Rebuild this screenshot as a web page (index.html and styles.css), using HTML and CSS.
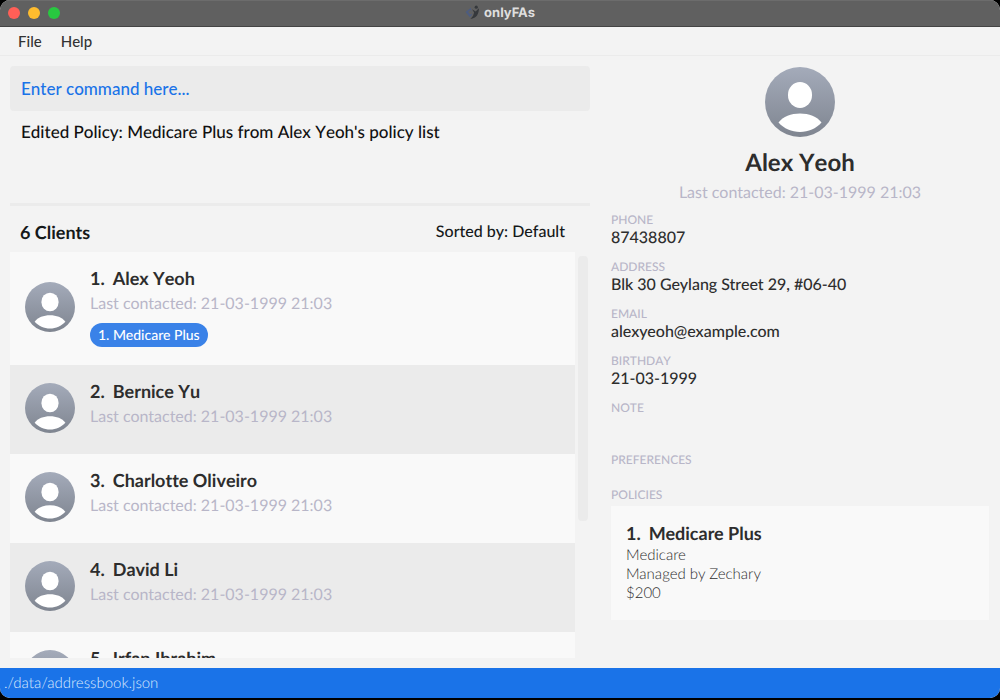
FILE: index.html
```html
<!DOCTYPE html>
<html lang="en">
<head>
<meta charset="utf-8">
<title>onlyFAs</title>
<link rel="stylesheet" href="styles.css">
</head>
<body>
<svg class="defs" aria-hidden="true">
  <defs>
    <linearGradient id="shade" x1="0" y1="0" x2="0" y2="1">
      <stop offset="0" stop-color="#a4abba"/>
      <stop offset="1" stop-color="#7f8590"/>
    </linearGradient>
    <symbol id="avatar" viewBox="0 0 70 70">
      <circle cx="35" cy="35" r="35" fill="url(#shade)"/>
      <rect x="23" y="15" width="24" height="26" rx="12" ry="12.5" fill="#fff"/>
      <path d="M13.500 55.500C18 49.500 26 46.500 35 46.500S52 49.500 56.500 55.500C51 61.500 43.500 65 35 65S19 61.500 13.500 55.500Z" fill="#fff"/>
    </symbol>
  </defs>
</svg>
<div class="window">
  <header class="titlebar">
    <div class="lights">
      <button class="light close" aria-label="Close"></button>
      <button class="light minimize" aria-label="Minimize"></button>
      <button class="light zoom" aria-label="Zoom"></button>
    </div>
    <h1 class="title">
      <svg class="logo" viewBox="0 0 14 14" aria-hidden="true">
        <path d="M5.500 2.500L0.500 6.500 4.500 11.500 6.500 9Z" fill="#4c5c80"/>
        <path d="M5 4.500L3 6.500 5 9 7 7.500Z" fill="#606060"/>
        <path d="M13 3C13 8 11 12.500 5 13 7.500 11 8 9 8.500 7L6.500 4 10 6Z" fill="#35383c"/>
        <circle cx="10.500" cy="2" r="1.500" fill="#35383c"/>
      </svg>
      onlyFAs
    </h1>
  </header>
  <nav class="menubar">
    <button class="menu">File</button>
    <button class="menu">Help</button>
  </nav>
  <main class="content">
    <section class="left">
      <input class="command" type="text" aria-label="Command" placeholder="Enter command here...">
      <p class="result">Edited Policy: Medicare Plus from Alex Yeoh's policy list</p>
      <div class="list-head">
        <h2 class="count">6 Clients</h2>
        <span class="sort">Sorted by: Default</span>
      </div>
      <div class="list-area">
        <ol class="clients">
          <li class="client">
            <svg class="avatar"><use href="#avatar"/></svg>
            <div class="info">
              <h3 class="name"><span>1.</span><span>Alex Yeoh</span></h3>
              <p class="contacted">Last contacted: 21-03-1999 21:03</p>
              <span class="tag">1. Medicare Plus</span>
            </div>
          </li>
          <li class="client">
            <svg class="avatar"><use href="#avatar"/></svg>
            <div class="info">
              <h3 class="name"><span>2.</span><span>Bernice Yu</span></h3>
              <p class="contacted">Last contacted: 21-03-1999 21:03</p>
            </div>
          </li>
          <li class="client">
            <svg class="avatar"><use href="#avatar"/></svg>
            <div class="info">
              <h3 class="name"><span>3.</span><span>Charlotte Oliveiro</span></h3>
              <p class="contacted">Last contacted: 21-03-1999 21:03</p>
            </div>
          </li>
          <li class="client">
            <svg class="avatar"><use href="#avatar"/></svg>
            <div class="info">
              <h3 class="name"><span>4.</span><span>David Li</span></h3>
              <p class="contacted">Last contacted: 21-03-1999 21:03</p>
            </div>
          </li>
          <li class="client">
            <svg class="avatar"><use href="#avatar"/></svg>
            <div class="info">
              <h3 class="name"><span>5.</span><span>Irfan Ibrahim</span></h3>
              <p class="contacted">Last contacted: 21-03-1999 21:03</p>
            </div>
          </li>
        </ol>
        <div class="track"><div class="thumb"></div></div>
      </div>
    </section>
    <section class="detail">
      <div class="profile">
        <svg class="avatar large"><use href="#avatar"/></svg>
        <h2 class="profile-name">Alex Yeoh</h2>
        <p class="contacted">Last contacted: 21-03-1999 21:03</p>
      </div>
      <dl class="fields">
        <div class="field"><dt>PHONE</dt><dd>87438807</dd></div>
        <div class="field"><dt>ADDRESS</dt><dd>Blk 30 Geylang Street 29, #06-40</dd></div>
        <div class="field"><dt>EMAIL</dt><dd>alexyeoh@example.com</dd></div>
        <div class="field"><dt>BIRTHDAY</dt><dd>21-03-1999</dd></div>
        <div class="field note"><dt>NOTE</dt><dd></dd></div>
        <div class="field preferences"><dt>PREFERENCES</dt><dd></dd></div>
        <div class="field policies"><dt>POLICIES</dt>
          <dd class="policy">
            <h3 class="name"><span>1.</span><span>Medicare Plus</span></h3>
            <p>Medicare</p>
            <p>Managed by Zechary</p>
            <p>$200</p>
          </dd>
        </div>
      </dl>
    </section>
  </main>
  <footer class="status">./data/addressbook.json</footer>
</div>
</body>
</html>
```
FILE: styles.css
```css
* { box-sizing: border-box; margin: 0; padding: 0; }

body {
  background: #000;
  color: #2d2d2d;
  font: 500 17px/24px Lato, "Open Sans", sans-serif;
  font-kerning: none;
  font-variant-ligatures: none;
  text-rendering: geometricPrecision;
}

button { border: 0; background: none; font: inherit; color: inherit; }
ol { list-style: none; }
.defs { position: absolute; width: 0; height: 0; }

.window {
  display: flex;
  flex-direction: column;
  height: calc(100vh - 2px);
  border-radius: 10px;
  overflow: hidden;
  background: #f3f3f3;
}

.titlebar {
  display: grid;
  grid-template-columns: 1fr auto 1fr;
  align-items: center;
  height: 27px;
  padding: 0 8px 2px;
  background: #606060;
  border-top: 1px solid #6c6c6c;
  border-bottom: 1px solid #444;
}
.lights { display: flex; gap: 8px; }
.light { width: 12px; height: 12px; border-radius: 50%; }
.close { background: #ff5f57; }
.minimize { background: #febc2e; }
.zoom { background: #28c840; }
.title {
  display: flex;
  align-items: center;
  gap: 4px;
  color: #dedede;
  font: 700 13px/16px Inter, sans-serif;
}
.logo { width: 15px; height: 15px; }

.menubar {
  display: flex;
  gap: 19px;
  height: 29px;
  padding: 0 18px;
  border-bottom: 1px solid #ebebeb;
}
.menu { font-size: 15px; line-height: 28px; color: #333; }

.content {
  flex: 1;
  display: grid;
  grid-template-columns: 580fr 378fr;
  column-gap: 21px;
  min-height: 0;
  padding: 10px 11px 10px 10px;
}
.left { display: flex; flex-direction: column; min-width: 0; min-height: 0; }

.command {
  width: 100%;
  height: 45px;
  flex: none;
  padding: 0 11px;
  border: 0;
  border-radius: 4px;
  background: #ebebeb;
  font: inherit;
  color: #1a73e8;
}
.command::placeholder { color: #1a73e8; opacity: 1; }
.result {
  flex: none;
  height: 95px;
  padding: 9px 11px;
  border-bottom: 3px solid #ebebeb;
  color: #111;
}

.list-head {
  display: flex;
  flex: none;
  align-items: center;
  justify-content: space-between;
  height: 46px;
  padding: 6px 25px 0 10px;
  color: #15191a;
}
.count { font-size: 18px; font-weight: 700; }
.sort { font-size: 16px; }

.list-area { display: flex; flex: 1; gap: 3px; min-height: 0; }
.clients { flex: 1; overflow: hidden; }
.track { width: 12px; padding: 4px 2px 0 0; }
.thumb { height: 66%; border-radius: 4px; background: #ebebeb; }

.client {
  display: flex;
  align-items: center;
  gap: 15px;
  padding: 14px 15px 16px;
  background: #f9f9f9;
}
.client:nth-child(even) { background: #ebebeb; }
.avatar { display: block; flex: none; width: 50px; height: 50px; }
.client .avatar { margin-bottom: 2px; }
.info { min-height: 59px; }
.name {
  display: flex;
  gap: 8px;
  font-size: 18px;
  font-weight: 700;
  line-height: 24px;
  color: #2d2d2d;
}
.contacted { font-size: 16px; line-height: 24px; font-weight: 400; font-kerning: normal; color: #b8b6c8; }
.info .contacted { padding-top: 2px; }
.tag {
  display: block;
  width: fit-content;
  margin: 7px 0 2px;
  padding: 0 8px;
  border-radius: 12px;
  background: #3a82e8;
  color: #fff;
  font-size: 14px;
  line-height: 24px;
  font-kerning: normal;
}

.detail { min-width: 0; }
.profile { display: flex; flex-direction: column; align-items: center; padding-top: 1px; }
.large { width: 70px; height: 70px; }
.profile-name { padding-top: 10px; font-size: 24px; font-weight: 700; line-height: 32px; }
.profile .contacted { padding-top: 2px; }

.fields { padding-top: 7px; }
.field { min-height: 47px; }
.field dt { color: #b8b6c8; font-size: 12px; line-height: 16px; }
.field dd { font-size: 16px; line-height: 19px; font-kerning: normal; }
.field.note { min-height: 52px; }
.field.preferences { min-height: 35px; }
.field .policy {
  margin-top: 3px;
  padding: 15px;
  background: #f9f9f9;
  font-size: 15px;
  font-weight: 300;
  line-height: 19px;
}
.policy .name { padding-bottom: 1px; }
.policy p:last-child { padding-bottom: 2px; }

.status {
  height: 30px;
  flex: none;
  padding: 0 4px;
  background: #1a73e8;
  color: #dbe9fc;
  font-size: 15px;
  font-weight: 300;
  line-height: 30px;
  font-kerning: normal;
}
```
